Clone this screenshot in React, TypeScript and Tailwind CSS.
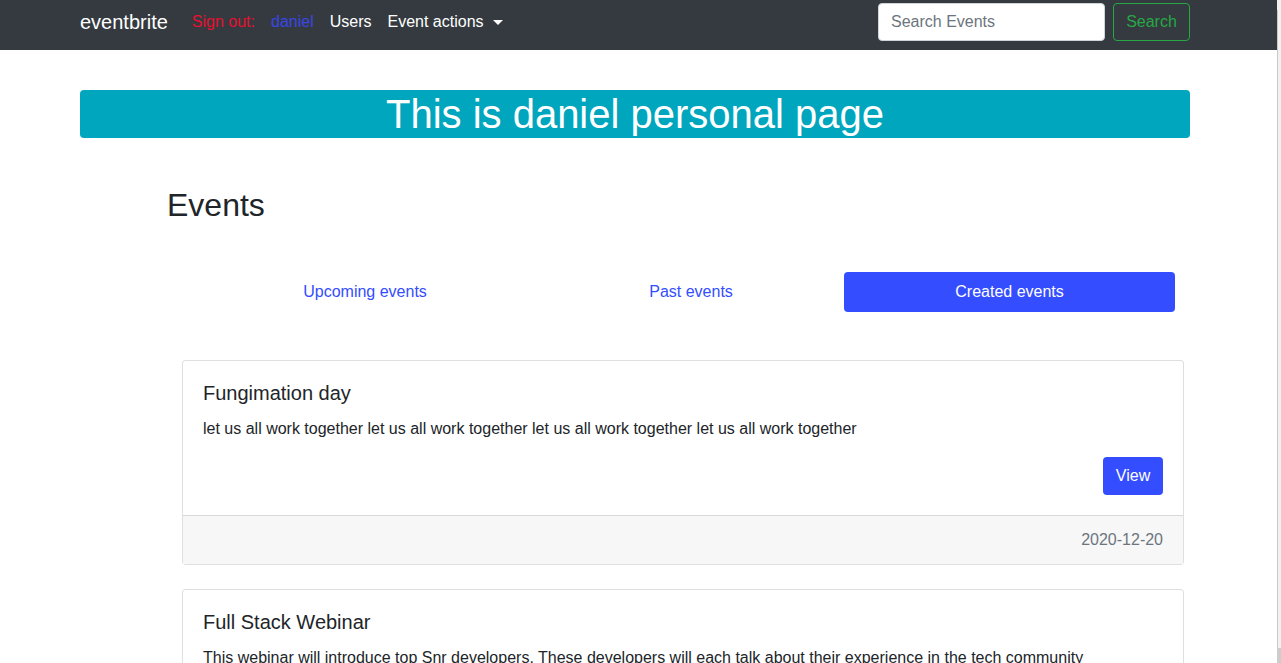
import React from 'react';

type EventItem = {
  title: string;
  body: string;
  date: string;
};

const events: EventItem[] = [
  {
    title: 'Fungimation day',
    body: 'let us all work together let us all work together let us all work together let us all work together',
    date: '2020-12-20',
  },
  {
    title: 'Full Stack Webinar',
    body: 'This webinar will introduce top Snr developers. These developers will each talk about their experience in the tech community',
    date: '2021-01-15',
  },
  {
    title: 'Code Review Meetup',
    body: 'Bring your code and let us review it together',
    date: '2021-02-10',
  },
];

const Navbar: React.FC = () => (
  <nav className="h-[50px] bg-[#343a40] pr-[11px]">
    <div className="mx-auto flex w-[1110px] items-center justify-between pt-[2px]">
      <div className="flex items-center">
        <a className="mr-4 py-[5px] text-[20px] leading-[30px] text-white">eventbrite</a>
        <ul className="flex items-center text-base leading-6">
          <li className="px-2 text-[#e8102f]">Sign out:</li>
          <li className="px-2 text-[#3a47e6]">daniel</li>
          <li className="px-2 text-white">Users</li>
          <li className="flex items-center px-2 text-white">
            Event actions
            <span className="ml-[9px] inline-block h-0 w-0 border-x-[5px] border-t-[5px] border-x-transparent border-t-white" />
          </li>
        </ul>
      </div>
      <form className="flex items-center">
        <input
          type="text"
          placeholder="Search Events"
          className="mr-2 h-[38px] w-[227px] rounded border border-[#ced4da] bg-white px-3 text-base text-[#495057] placeholder:text-[#6c757d] outline-none"
        />
        <button
          type="button"
          className="h-[38px] w-[77px] rounded border border-[#28a745] text-base text-[#28a745]"
        >
          Search
        </button>
      </form>
    </div>
  </nav>
);

const EventCard: React.FC<{ item: EventItem }> = ({ item }) => (
  <div className="mb-6 rounded border border-black/[0.125] bg-white">
    <div className="px-5 pt-5 pb-5">
      <h5 className="mb-3 text-[20px] leading-6 text-[#212529]">{item.title}</h5>
      <p className="mb-4 text-base leading-6 text-[#212529]">{item.body}</p>
      <div className="flex justify-end">
        <button className="h-[38px] w-[60px] rounded bg-[#334dff] text-base text-white">View</button>
      </div>
    </div>
    <div className="border-t border-black/[0.125] bg-[#f7f7f7] px-5 py-3 text-right text-base leading-6 text-[#6c757d]">
      {item.date}
    </div>
  </div>
);

export default function App() {
  return (
    <div className="min-h-screen bg-white font-['Liberation_Sans',Arial,sans-serif] text-[#212529]">
      <Navbar />
      <main className="pr-[11px] pt-10 pb-10">
        <div className="mx-auto w-[1110px]">
          <div className="rounded bg-[#00a6bd] text-center text-[40px] leading-[48px] text-white">
            This is daniel personal page
          </div>

          <h2 className="mt-12 ml-[87px] text-[32px] leading-[38px] text-[#212529]">Events</h2>

          <div className="mt-12 ml-[112px] mr-[15px] flex text-base leading-6">
            <div className="flex-auto rounded px-4 py-2 text-center text-[#334dff]">Upcoming events</div>
            <div className="flex-auto rounded px-4 py-2 text-center text-[#334dff]">Past events</div>
            <div className="flex-auto rounded bg-[#334dff] px-4 py-2 text-center text-white">Created events</div>
          </div>

          <div className="mt-12 ml-[102px] mr-[6px]">
            {events.map((item) => (
              <EventCard key={item.title} item={item} />
            ))}
          </div>
        </div>
      </main>

      {/* scrollbar edge seen at the right of the window */}
      <div className="fixed top-0 right-0 h-full w-[4px] bg-[#f1f1f1]">
        <div className="mt-[10px] h-[calc(100%-25px)] w-[1px] bg-[#c8c8c8]" />
        <div className="h-[15px] w-full bg-[#cdcdcd]" />
      </div>
    </div>
  );
}
